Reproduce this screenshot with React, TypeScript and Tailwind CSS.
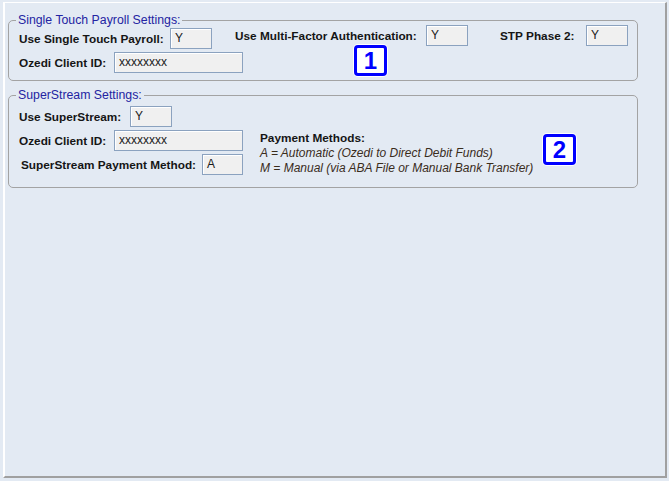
import React from "react";

const font = { fontFamily: '"Liberation Sans", Arial, sans-serif' };

function Field({ value, w }: { value: string; w: string }) {
  return (
    <div
      className={`${w} h-[21px] border border-[#8ba2bf] bg-[#f0f0f0] pl-[4px] text-[12px] leading-[19px] text-[#1a1a1a] shadow-[inset_1px_1px_0_#ffffff]`}
    >
      {value}
    </div>
  );
}

function Label({ text, w, extra = "" }: { text: string; w: string; extra?: string }) {
  return (
    <div className={`${w} ${extra} text-[11.8px] font-bold leading-[14px] text-[#151515] whitespace-nowrap`}>
      {text}
    </div>
  );
}

function Badge({ n, pos }: { n: string; pos: string }) {
  return (
    <div
      className={`absolute ${pos} w-[33px] h-[31px] rounded-[4px] border-[3px] border-[#0000ff] bg-white flex items-center justify-center text-[24px] font-bold leading-none text-[#0000ff] shadow-[0_0_0_1px_#ffffff]`}
    >
      {n}
    </div>
  );
}

function Group({
  title,
  children,
  className = "",
}: {
  title: string;
  children: React.ReactNode;
  className?: string;
}) {
  return (
    <div className={`relative ml-[3px] w-[630px] rounded-[5px] border border-[#a3a3a3] ${className}`}>
      <span className="absolute left-[7px] top-[-8px] bg-[#e3eaf3] px-[2px] text-[12.3px] leading-[14px] text-[#2424a2]">
        {title}
      </span>
      {children}
    </div>
  );
}

export default function App() {
  return (
    <div className="w-[669px] h-[481px] bg-[#e3eaf3] pt-[2px] pl-[3px] pr-[2px] pb-[3px]" style={font}>
      <div className="h-full border-l-2 border-t border-white border-r-2 border-b-2 border-r-[#a0a0a0] border-b-[#a0a0a0] pt-[1px]">
        <div className="h-[16px]" />
        <Group title="Single Touch Payroll Settings:" className="pt-[4px] pb-[7px]">
          <div className="flex items-start pl-[10px]">
            <div className="flex items-center mt-[3px]">
              <Label text="Use Single Touch Payroll:" w="w-[151px]" />
              <Field value="Y" w="w-[42px]" />
            </div>
            <div className="flex items-center ml-[23px]">
              <Label text="Use Multi-Factor Authentication:" w="w-[191px]" />
              <Field value="Y" w="w-[42px]" />
            </div>
            <div className="flex items-center ml-[32px]">
              <Label text="STP Phase 2:" w="w-[86px]" />
              <Field value="Y" w="w-[42px]" />
            </div>
          </div>
          <div className="flex items-center pl-[10px] mt-[3px]">
            <Label text="Ozedi Client ID:" w="w-[95px]" />
            <Field value="xxxxxxxx" w="w-[129px]" />
          </div>
          <Badge n="1" pos="left-[345px] top-[24px]" />
        </Group>

        <Group title="SuperStream Settings:" className="mt-[14px] pt-[10px] pb-[11px]">
          <div className="flex items-start pl-[10px]">
            <div className="flex flex-col w-[224px]">
              <div className="flex items-center">
                <Label text="Use SuperStream:" w="w-[111px]" />
                <Field value="Y" w="w-[42px]" />
              </div>
              <div className="flex items-center mt-[3px]">
                <Label text="Ozedi Client ID:" w="w-[95px]" />
                <Field value="xxxxxxxx" w="w-[129px]" />
              </div>
              <div className="flex items-center mt-[3px]">
                <Label text="SuperStream Payment Method:" w="w-[183px]" extra="pl-[2px]" />
                <Field value="A" w="w-[41px]" />
              </div>
            </div>
            <div className="ml-[17px] mt-[25px] text-[12px] leading-[15px]">
              <div className="font-bold text-[11.8px] text-[#151515]">Payment Methods:</div>
              <div className="italic text-[#3a2c1c]">A = Automatic (Ozedi to Direct Debit Funds)</div>
              <div className="italic text-[#3a2c1c]">M = Manual (via ABA File or Manual Bank Transfer)</div>
            </div>
          </div>
          <Badge n="2" pos="left-[534px] top-[38px]" />
        </Group>
      </div>
    </div>
  );
}
